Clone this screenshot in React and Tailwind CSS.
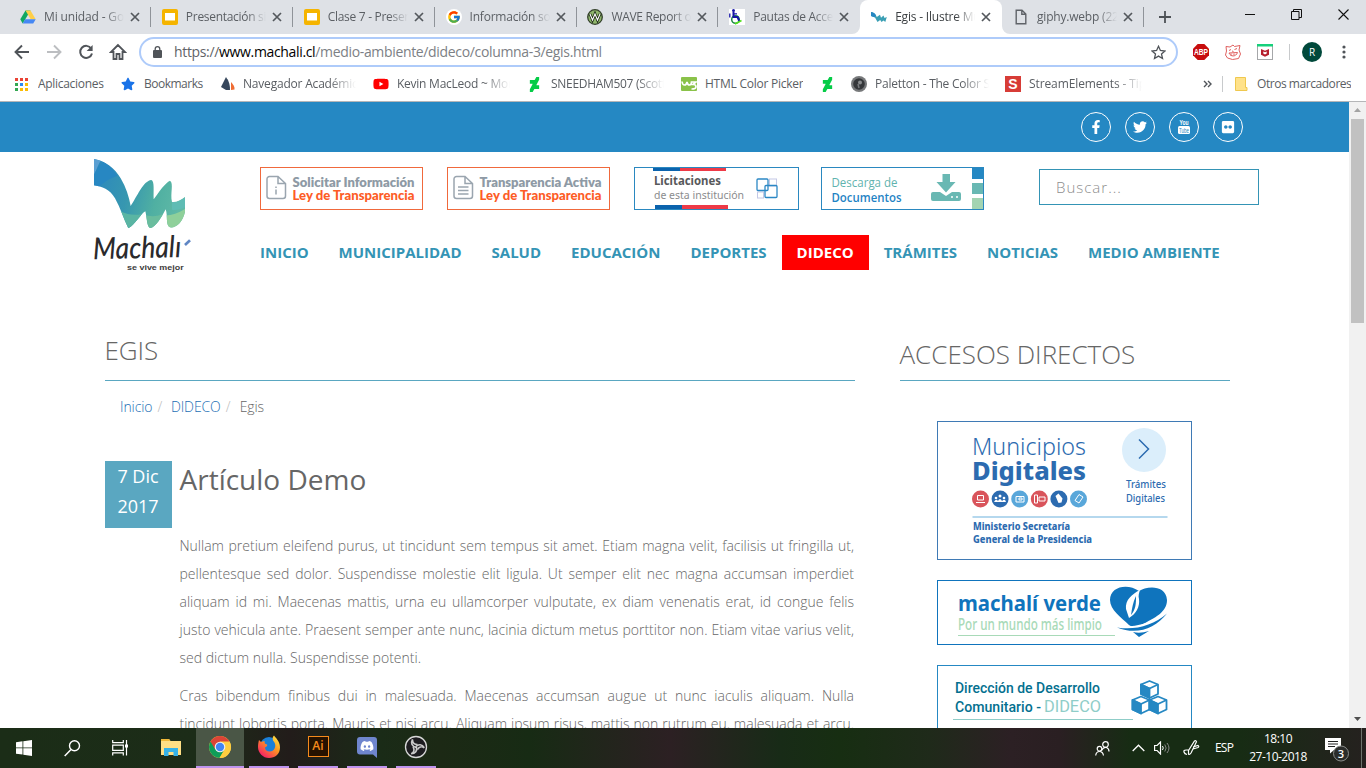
import React from "react";
import { FaFacebookF, FaTwitter, FaFlickr, FaDiscord, FaYoutube, FaStar } from "react-icons/fa";
import { FcGoogle } from "react-icons/fc";
import { SiDeviantart } from "react-icons/si";

const fade = "[mask-image:linear-gradient(to_right,#000_76%,transparent_100%)]";

/* ---------- browser tab icons ---------- */
const DriveIcon = () => (
  <svg width="16" height="16" viewBox="0 0 16 16">
    <path d="M5.5 1.5h5L5 10.7 2.7 14.5 0.3 10.3z" fill="#11a861" />
    <path d="M5.5 1.5h5l5.2 8.8h-5z" fill="#ffcf48" />
    <path d="M5.2 10.3h10.5l-2.5 4.2H2.7z" fill="#4688f4" />
  </svg>
);
const SlidesIcon = () => (
  <svg width="16" height="16" viewBox="0 0 16 16">
    <rect width="16" height="16" rx="2" fill="#f5b400" />
    <rect x="3" y="4" width="10" height="7.5" fill="#fff" />
  </svg>
);
const GoogleIcon = () => (
  <span className="flex h-4 w-4 items-center justify-center rounded-full bg-white">
    <FcGoogle size={14} />
  </span>
);
const WaveIcon = () => (
  <svg width="16" height="16" viewBox="0 0 16 16">
    <circle cx="8" cy="8" r="7.3" fill="#8fb56c" stroke="#33402b" strokeWidth="1.3" />
    <path d="M3 5l2.5 6L8 5l2.5 6L13 5" fill="none" stroke="#17240f" strokeWidth="2.6" />
    <path d="M3 5l2.5 6L8 5l2.5 6L13 5" fill="none" stroke="#fff" strokeWidth="1.1" />
  </svg>
);
const AccessIcon = () => (
  <svg width="16" height="16" viewBox="0 0 16 16">
    <rect width="16" height="16" fill="#fff" />
    <circle cx="6.5" cy="10.5" r="3.8" fill="none" stroke="#1d8a45" strokeWidth="1.5" />
    <circle cx="4.5" cy="1.5" r="1.5" fill="#1616a8" />
    <path d="M4.5 3v5h4l2 4.500" fill="none" stroke="#1616a8" strokeWidth="2" />
    <path d="M.8 4.500v4M4.500 4.800h3.500" stroke="#1616a8" strokeWidth="1.300" fill="none" />
    <path d="M6 15l6.500-3.500" stroke="#52e01e" strokeWidth="1.500" />
  </svg>
);
const MachaliIcon = () => (
  <svg width="16" height="16" viewBox="0 0 16 16">
    <path d="M0 3c3 .5 4.500 2 5.800 5L9 5.800l1 3L12.500 6.500l1 2.500L15.800 8l-1.500 5-1.800-1.500L10.500 13l-1.300-2L6.500 13 4 8.500 0 7z" fill="#3a9fb4" />
    <path d="M0 3c3 .5 4 1.500 5 3.500L3.500 8.200 0 7z" fill="#2787c2" />
  </svg>
);
const FileIcon = () => (
  <svg width="16" height="16" viewBox="0 0 16 16">
    <path d="M3.200 1.200h5.800l3.800 3.800v9.800h-9.600zM8.800 1.500v3.800h3.800" fill="none" stroke="#5f6368" strokeWidth="1.400" />
  </svg>
);
const Close = () => (
  <svg width="10" height="10" viewBox="0 0 10 10">
    <path d="M1 1l8 8M9 1l-8 8" stroke="#54585d" strokeWidth="1.700" />
  </svg>
);

const tabs = [
  { icon: <DriveIcon />, label: "Mi unidad - Google", track: "tracking-[-0.15px]" },
  { icon: <SlidesIcon />, label: "Presentación sin título", track: "tracking-[-0.3px]" },
  { icon: <SlidesIcon />, label: "Clase 7 - Presentación", track: "tracking-[-0.3px]" },
  { icon: <GoogleIcon />, label: "Información sobre", track: "tracking-[-0.22px]" },
  { icon: <WaveIcon />, label: "WAVE Report of", track: "tracking-[-0.3px]" },
  { icon: <AccessIcon />, label: "Pautas de Accesibilidad", track: "tracking-[-0.3px]" },
  { icon: <MachaliIcon />, label: "Egis - Ilustre Municipalidad", track: "tracking-[-0.2px]", active: true },
  { icon: <FileIcon />, label: "giphy.webp (220×220)", track: "tracking-[-0.2px]" },
];

function TabStrip() {
  return (
    <div className="flex h-[34px] bg-[#dee1e6] pl-[9px]">
      {tabs.map((t, i) => (
        <div
          key={i}
          className={
            "relative flex h-[34px] w-[141.86px] shrink-0 items-center pl-[11px] " +
            (t.active ? "rounded-t-lg bg-white" : "")
          }
        >
          {t.active && (
            <>
              <svg className="absolute bottom-0 -left-2" width="8" height="8"><path d="M8 0v8H0a8 8 0 0 0 8-8z" fill="#fff" /></svg>
              <svg className="absolute -right-2 bottom-0" width="8" height="8"><path d="M0 0v8h8a8 8 0 0 1-8-8z" fill="#fff" /></svg>
            </>
          )}
          <span className="flex w-4 shrink-0">{t.icon}</span>
          <span
            className={
              "ml-2 w-[80px] shrink-0 overflow-hidden text-[12px] leading-5 whitespace-nowrap " +
              fade + " " + t.track + " " + (t.active ? "text-[#3c4043]" : "text-[#5b5f64]")
            }
          >
            {t.label}
          </span>
          <span className="ml-[6px] flex"><Close /></span>
          {!t.active && i !== 5 && <span className="ml-[10px] h-5 w-px bg-[#8f9399]" />}
        </div>
      ))}
      <svg className="mt-[10px] ml-[14px]" width="14" height="14"><path d="M7 1v12M1 7h12" stroke="#4d5156" strokeWidth="1.800" /></svg>
      <div className="ml-auto flex items-start pt-[9px] pr-[17px]">
        <svg width="10" height="12"><path d="M0 5.500h10" stroke="#111" /></svg>
        <svg className="ml-[36px]" width="11" height="11"><path d="M.5 2.500h7.500v8H.5zM2.500 2.500v-2h8v8H8" fill="none" stroke="#111" /></svg>
        <svg className="ml-[36px]" width="11" height="11"><path d="M.5.5l10 10M10.500.5l-10 10" stroke="#111" strokeWidth="1.100" /></svg>
      </div>
    </div>
  );
}

function Toolbar() {
  return (
    <div className="flex h-[36px] items-center bg-white">
      <svg className="ml-[14px]" width="16" height="16" viewBox="0 0 16 16"><path d="M15 8H2M8 1.500L1.500 8 8 14.500" fill="none" stroke="#505459" strokeWidth="1.900" /></svg>
      <svg className="ml-[16px]" width="16" height="16" viewBox="0 0 16 16"><path d="M1 8h13M8 1.500L14.500 8 8 14.500" fill="none" stroke="#bcbec1" strokeWidth="1.900" /></svg>
      <svg className="ml-[16px]" width="16" height="16" viewBox="0 0 16 16"><path d="M13.200 4.500A6 6 0 1 0 14 9.500" fill="none" stroke="#505459" strokeWidth="2" /><path d="M14.600.9v6H8.600z" fill="#505459" /></svg>
      <svg className="ml-[15px]" width="18" height="18" viewBox="0 0 18 18"><path d="M9 2L2 9h2.500v7h3v-5h3v5h3V9H16z" fill="none" stroke="#505459" strokeWidth="1.800" /></svg>
      <div className="ml-[12px] flex h-[30px] w-[1039px] items-center rounded-full border-2 border-[#aecbfa] pl-[12px]">
        <svg width="9" height="12" viewBox="0 0 9 12"><rect y="4" width="9" height="8" rx="1" fill="#505459" /><path d="M2.200 5V3a2.300 2.300 0 0 1 4.600 0v2" fill="none" stroke="#505459" strokeWidth="1.300" /></svg>
        <span className="ml-[12px] text-[14px] leading-5 tracking-[-0.34px] whitespace-nowrap text-[#7c8085]">
          <span className="text-[#5f6368]">https://</span><span className="text-black">www.machali.cl</span>/medio-ambiente/dideco/columna-3/egis.html
        </span>
        <svg className="mr-[10px] ml-auto" width="15" height="15" viewBox="0 0 15 15"><path d="M7.500 1.300l1.900 4.200 4.500.5-3.400 3 1 4.500-4-2.400-4 2.400 1-4.500-3.400-3 4.500-.5z" fill="none" stroke="#505459" strokeWidth="1.300" /></svg>
      </div>
      <svg className="ml-[15px]" width="16" height="16" viewBox="0 0 16 16"><path d="M4.700 0h6.600L16 4.700v6.600L11.300 16H4.700L0 11.300V4.700z" fill="#c70d0d" /><text x="8" y="11" textAnchor="middle" textLength="14" lengthAdjust="spacingAndGlyphs" fontFamily="Liberation Sans" fontWeight="700" fontSize="8.500" fill="#fff">ABP</text></svg>
      <svg className="ml-[16px]" width="16" height="16" viewBox="0 0 16 16"><path d="M1 2.500l4 .5 3-2 1.500 1.500L15 1.500 14 6l1.500 4-2 4.500-6 1L2.500 14 .5 11l1-4zM4 6.500l2-1M9.500 5.500l2.500-1M4 9c1.500 4 7 4 8.500-.5zM7 7l1.500.5M6 9.500v2M9 9.500v2" fill="none" stroke="#e0605f" strokeWidth="1" /></svg>
      <svg className="ml-[16px]" width="16" height="16" viewBox="0 0 16 16"><rect x=".5" y=".5" width="15" height="15" fill="#fff" stroke="#a5a7a9" /><path d="M0 0h16v2.500H0z" fill="#16d07b" /><path d="M4 5l4 1.800L12 5v5.800l-4 2-4-2z" fill="#b61f2d" /><path d="M6.300 7.500L8 8.300l1.700-.8v2L8 10.500l-1.700-1z" fill="#fff" /></svg>
      <span className="ml-[16px] h-4 w-px bg-[#c8cacc]" />
      <span className="ml-[12px] flex h-5 w-5 items-center justify-center rounded-full bg-[#00493b] text-[10px] text-white">R</span>
      <svg className="ml-[20px]" width="4" height="14"><circle cx="2" cy="2" r="1.600" fill="#505459" /><circle cx="2" cy="7" r="1.600" fill="#505459" /><circle cx="2" cy="12" r="1.600" fill="#505459" /></svg>
    </div>
  );
}

const AppsIcon = () => (
  <svg width="13" height="13">
    {["#ea4335", "#ea4335", "#ea4335", "#34a853", "#2b8af5", "#fbbc05", "#34a853", "#fbbc05", "#fbbc05"].map((c, i) => (
      <rect key={i} x={(i % 3) * 5} y={Math.floor(i / 3) * 5} width="3" height="3" fill={c} />
    ))}
  </svg>
);

function Bookmarks() {
  const txt = "overflow-hidden text-[12px] leading-5 whitespace-nowrap shrink-0 text-[#5a5e63] ";
  return (
    <div className="flex h-[31px] items-center bg-white pb-[3px] pl-[15px]">
      <AppsIcon />
      <span className={txt + "ml-[10px] w-[83px] tracking-[-0.3px]"}>Aplicaciones</span>
      <FaStar size={14} color="#1a73e8" />
      <span className={txt + "ml-[9px] w-[77px] tracking-[-0.5px]"}>Bookmarks</span>
      <svg width="14" height="14" viewBox="0 0 14 14"><path d="M5 0c2 3 4 6 4 13H5L0 10z" fill="#36475c" /><path d="M10 5c2 2 4 5 3.500 7.500L10 13z" fill="#ef6c33" /></svg>
      <span className={txt + fade + " ml-[8px] w-[113px] tracking-[-0.2px]"}>Navegador Académico</span>
      <FaYoutube className="ml-[17px]" size={16} color="#f00" />
      <span className={txt + fade + " ml-[8px] w-[113px] tracking-[-0.25px]"}>Kevin MacLeod ~ Monk</span>
      <SiDeviantart className="ml-[17px]" size={15} color="#05cc47" />
      <span className={txt + fade + " ml-[9px] w-[113px] tracking-[-0.3px]"}>SNEEDHAM507 (Scott)</span>
      <svg className="ml-[17px]" width="16" height="14" viewBox="0 0 16 14"><rect width="16" height="14" rx="1" fill="#8ac249" /><path d="M1 4.500q.5 3.500 2.500 3.500T6 5q.5 3 2.500 3t2-3h4.500l-3 2.500q3 0 3 2.300T10.500 12" fill="none" stroke="#fff" strokeWidth="1.700" /></svg>
      <span className={txt + "ml-[8px] w-[98px] tracking-[-0.25px]"}>HTML Color Picker</span>
      <SiDeviantart className="ml-[17px]" size={15} color="#05cc47" />
      <svg className="ml-[16px]" width="16" height="16" viewBox="0 0 16 16"><circle cx="8" cy="8" r="8" fill="#77797b" /><circle cx="8" cy="8" r="5.800" fill="#35373a" /><circle cx="9" cy="6.500" r="2" fill="#8a8c8e" /><path d="M7 8l1 4" stroke="#77797b" strokeWidth="1.500" /></svg>
      <span className={txt + fade + " ml-[8px] w-[114px] tracking-[-0.25px]"}>Paletton - The Color Scheme</span>
      <svg className="ml-[16px]" width="16" height="16" viewBox="0 0 16 16"><rect width="16" height="16" fill="#d73c37" /><text x="8" y="13" textAnchor="middle" fontFamily="Liberation Sans" fontWeight="700" fontSize="14" fill="#fff">S</text></svg>
      <span className={txt + fade + " ml-[8px] w-[113px] tracking-[-0.1px]"}>StreamElements - Tip</span>
      <svg className="ml-[61px]" width="9" height="8"><path d="M1 1l3 3-3 3M5 1l3 3-3 3" fill="none" stroke="#505459" strokeWidth="1.400" /></svg>
      <span className="ml-[10px] h-4 w-px bg-[#c8cacc]" />
      <svg className="ml-[12px]" width="13" height="14" viewBox="0 0 13 14"><path d="M.5.5h10v10h1.500v3H.5z" fill="#ffe28a" stroke="#efc84f" /></svg>
      <span className={txt + "ml-[9px] tracking-[-0.45px]"}>Otros marcadores</span>
    </div>
  );
}

/* ---------- site header ---------- */
const YouTubeStack = () => (
  <svg width="14" height="16" viewBox="0 0 14 16">
    <text x="7" y="6.300" textAnchor="middle" textLength="9" lengthAdjust="spacingAndGlyphs" fontFamily="Liberation Sans" fontWeight="700" fontSize="7.500" fill="#fff">You</text>
    <rect x="1" y="7" width="12" height="8" rx="1.500" fill="#fff" />
    <text x="7" y="13.500" textAnchor="middle" textLength="10" lengthAdjust="spacingAndGlyphs" fontFamily="Liberation Sans" fontWeight="400" fontSize="7" fill="#2788c2">Tube</text>
  </svg>
);

const SocialBar = () => (
  <div className="flex h-[50px] items-center justify-end gap-[14px] bg-[#2588c3] pr-[106px] text-white">
    {[<FaFacebookF size={14} />, <FaTwitter size={14} />, <YouTubeStack />, <FaFlickr size={14} />].map((ic, i) => (
      <span key={i} className="flex h-[30px] w-[30px] items-center justify-center rounded-full border border-white">{ic}</span>
    ))}
  </div>
);

const Logo = () => (
  <svg className="shrink-0" width="100" height="116" viewBox="36 21 300 348">
    <defs>
      <linearGradient id="lg" x1="0" y1="0" x2="1" y2="0.200">
        <stop offset="0" stopColor="#2a85c0" /><stop offset=".45" stopColor="#3797b0" /><stop offset=".75" stopColor="#50b0a2" /><stop offset="1" stopColor="#5fb9a6" />
      </linearGradient>
      <clipPath id="sw"><path d="M42 27C75 32 105 55 122 85C138 112 147 140 152 168C170 142 190 92 214 90C224 94 220 120 221 148C238 124 256 98 270 92C282 100 270 130 276 156C290 158 302 150 315 141V185C308 215 290 234 270 232C256 226 264 198 257 178C245 202 225 235 210 234C200 228 202 208 196 184C182 192 165 225 145 235C130 205 122 175 105 145C90 118 65 110 42 106Z" /></clipPath>
    </defs>
    <g clipPath="url(#sw)">
      <rect x="36" y="20" width="290" height="220" fill="url(#lg)" />
      <path d="M36 20h34c-14 20-22 38-28 62h-6z" fill="#5a9fd2" />
      <path d="M70 35c20 12 34 28 42 42-24 8-42 20-58 36l-18-2v-25c8-20 18-36 34-51z" fill="#2787c2" />
      <path d="M120 183c25 12 45 14 66 9l-15 48h-51z" fill="#5ab5a3" />
      <path d="M190 193c18 7 36 8 58 0l-6 47h-52z" fill="#6abd9e" />
      <path d="M250 196c22 2 46-6 70-22v70h-70z" fill="#8fd09a" />
      <path d="M276 156c14 2 28-6 40-15v30c-16 8-28 10-40 8z" fill="#5fbcb4" />
    </g>
    <text transform="rotate(-1.500 40 326)" x="40" y="328" textLength="264" lengthAdjust="spacingAndGlyphs" fontFamily="Lato" fontStyle="italic" fontWeight="500" fontSize="90" fill="#2a2a2c">Machalı</text>
    <path d="M315 285l15-14" stroke="#5f86c4" strokeWidth="8" />
    <text x="141" y="359" textLength="170" lengthAdjust="spacingAndGlyphs" fontFamily="Liberation Sans" fontSize="22" fontWeight="700" fill="#3c3c3c">se vive mejor</text>
  </svg>
);

const DocIcon = ({ info }) => (
  <g fill="none" stroke="#9aa5af" strokeWidth="1.500">
    <path d="M9.500 9.500h8.500l7.500 7V29a2.500 2.500 0 0 1-2.500 2.500H9.500a2.500 2.500 0 0 1-2.500-2.500V12a2.500 2.500 0 0 1 2.500-2.500zM18 9.500v7h7" />
    {info ? <path d="M16 19.500v1.500M16 22.500v5" /> : <path d="M11 20h10.500M11 23.500h10.500M11 27h10.500" />}
  </g>
);
const Transparency = ({ title, info }) => (
  <svg width="163" height="43" className="border border-[#f0693c]" viewBox="1 1 161 41">
    <DocIcon info={info} />
    <text x="32.500" y="20" textLength="122" lengthAdjust="spacingAndGlyphs" fontFamily="Lato" fontWeight="800" fontSize="13.500" fill="#8e9aa5">{title}</text>
    <text x="32.500" y="32.500" textLength="122" lengthAdjust="spacingAndGlyphs" fontFamily="Lato" fontWeight="900" fontSize="13" fill="#fd5c26">Ley de Transparencia</text>
  </svg>
);
const Licitaciones = () => (
  <svg width="165" height="43" className="border border-[#2a88c0]" viewBox="1 1 163 41">
    <path d="M19 1h27v3H19zM21 38h27v4H21z" fill="#0b63ad" />
    <path d="M46 1h46v3H46zM48 38h46v4H48z" fill="#ee3a47" />
    <text x="20" y="18" textLength="67" lengthAdjust="spacingAndGlyphs" fontFamily="Noto Sans" fontWeight="700" fontSize="11.500" fill="#58595b">Licitaciones</text>
    <text x="20" y="32" textLength="90" lengthAdjust="spacingAndGlyphs" fontFamily="Noto Sans" fontSize="11" fill="#8b8c8e">de esta institución</text>
    <g fill="none"><rect x="135.500" y="12" width="7" height="7" stroke="#c3c8e6" /><rect x="123.500" y="25" width="6" height="6" stroke="#c3c8e6" />
      <rect x="123" y="12" width="11" height="11.500" rx="1" stroke="#2b88c5" strokeWidth="1.300" /><rect x="131" y="18.500" width="12" height="12" rx="1" stroke="#2b88c5" strokeWidth="1.300" /></g>
  </svg>
);
const Descarga = () => (
  <svg width="163" height="43" className="border border-[#2a88c0]" viewBox="1 1 161 41">
    <text x="10.500" y="19.500" textLength="66" lengthAdjust="spacingAndGlyphs" fontFamily="Open Sans" fontWeight="500" fontSize="12" fill="#5fb3ae">Descarga de</text>
    <text x="10.500" y="35" textLength="70" lengthAdjust="spacingAndGlyphs" fontFamily="Open Sans" fontWeight="600" fontSize="12" fill="#1f83c4">Documentos</text>
    <path d="M121.500 7h7.500v8h5.500L125 25.500 115.500 15h6z" fill="#69b8b3" />
    <path fillRule="evenodd" d="M112 25h7l6 4 6-4h7q2 0 2 2v5q0 2-2 2h-26q-2 0-2-2v-5q0-2 2-2zM130 30a1 1 0 1 0 2 0 1 1 0 0 0-2 0M135 30a1 1 0 1 0 2 0 1 1 0 0 0-2 0" fill="#69b8b3" />
    <path d="M151 1h12v11h-12z" fill="#2588c3" /><path d="M151 16h12v11h-12z" fill="#69b8b3" /><path d="M151 31h12v11h-12z" fill="#a3d4b2" />
  </svg>
);

const nav = ["INICIO", "MUNICIPALIDAD", "SALUD", "EDUCACIÓN", "DEPORTES", "DIDECO", "TRÁMITES", "NOTICIAS", "MEDIO AMBIENTE"];

const Header = () => (
  <div className="flex h-[167px] pt-[5px] pl-[92px]">
    <Logo />
    <div className="ml-[68px]">
      <div className="flex pt-[10px]">
        <Transparency title="Solicitar Información" info />
        <span className="w-6" />
        <Transparency title="Transparencia Activa" />
        <span className="w-6" />
        <Licitaciones />
        <span className="w-[22px]" />
        <Descarga />
        <div className="mt-[2px] ml-[55px] flex h-[36px] w-[220px] items-center border border-[#3494b5] pl-[16px] text-[15px] font-light tracking-[1px] text-[#8d8d8d]">Buscar...</div>
      </div>
      <div className="mt-[25px] -ml-[15px] flex">
        {nav.map((n) => (
          <span key={n} className={"h-[35px] px-[15px] text-[15px] leading-[35px] font-bold whitespace-nowrap " + (n === "DIDECO" ? "bg-[#ff0000] text-white" : "text-[#3494b5]")}>{n}</span>
        ))}
      </div>
    </div>
  </div>
);

/* ---------- article ---------- */
const paragraphs = [
  [
    "Nullam pretium eleifend purus, ut tincidunt sem tempus sit amet. Etiam magna velit, facilisis ut fringilla ut,",
    "pellentesque sed dolor. Suspendisse molestie elit ligula. Ut semper elit nec magna accumsan imperdiet",
    "aliquam id mi. Maecenas mattis, urna eu ullamcorper vulputate, ex diam venenatis erat, id congue felis",
    "justo vehicula ante. Praesent semper ante nunc, lacinia dictum metus porttitor non. Etiam vitae varius velit,",
    "sed dictum nulla. Suspendisse potenti.",
  ],
  [
    "Cras bibendum finibus dui in malesuada. Maecenas accumsan augue ut nunc iaculis aliquam. Nulla",
    "tincidunt lobortis porta. Mauris et nisi arcu. Aliquam ipsum risus, mattis non rutrum eu, malesuada et arcu.",
  ],
];

const Article = () => (
  <div className="w-[750px]">
    <h1 className="h-[62px] border-b border-[#5aa7c1] pt-[14px] text-[26px] leading-[35px] font-light tracking-[-0.1px] text-[#666]"><span className="-ml-[0.500px]">EGIS</span></h1>
    <div className="mt-[16px] flex pl-[15px] text-[14px] leading-5 font-light tracking-[-0.1px] text-[#666]">
      <span className="text-[#1c6fb5]">Inicio</span>
      <span className="w-[18.500px] pl-[5px] text-[#bbb]">/</span>
      <span className="text-[#1c6fb5]">DIDECO</span>
      <span className="w-[19px] pl-[5px] text-[#bbb]">/</span>
      <span>Egis</span>
    </div>
    <div className="mt-[44px] flex">
      <div className="h-[67px] w-[67px] bg-[#5aa7c1] pr-px text-center text-[18px] leading-[30px] font-medium text-white">7 Dic<br />2017</div>
      <div className="ml-[7.500px] w-[674.500px]">
        <h2 className="h-[71px] text-[28px] leading-[36px] text-[#666]">Artículo Demo</h2>
        {paragraphs.map((lines, i) => (
          <p key={i} className="mb-[10px] text-[14px] leading-[28px] font-light text-[#666]">
            {lines.map((l, j) => (
              <span key={j} className={"block whitespace-nowrap " + (i === 0 && j === 4 ? "" : "[text-align-last:justify]")}>{l}</span>
            ))}
          </p>
        ))}
      </div>
    </div>
  </div>
);

/* ---------- sidebar banners ---------- */
const Municipios = () => (
  <svg width="255" height="139" viewBox="0 0 255 139" className="block">
    <rect x=".5" y=".5" width="254" height="138" fill="#fff" stroke="#3f7ab5" />
    <g fontFamily="Noto Sans" fill="#2c6bb0">
      <text x="35" y="34" textLength="114" lengthAdjust="spacingAndGlyphs" fontWeight="350" fontSize="23.500">Municipios</text>
      <text x="35" y="58.500" textLength="114" lengthAdjust="spacingAndGlyphs" fontWeight="800" fontSize="24.500">Digitales</text>
      <text x="189" y="67" textLength="40" lengthAdjust="spacingAndGlyphs" fontWeight="500" fontSize="10.500">Trámites</text>
      <text x="189" y="80.500" textLength="39" lengthAdjust="spacingAndGlyphs" fontWeight="500" fontSize="10.500">Digitales</text>
      <text x="36" y="109" textLength="97" lengthAdjust="spacingAndGlyphs" fontWeight="800" fontSize="10">Ministerio Secretaría</text>
      <text x="36" y="122" textLength="119" lengthAdjust="spacingAndGlyphs" fontWeight="800" fontSize="10">General de la Presidencia</text>
    </g>
    <circle cx="207" cy="29" r="22" fill="#dbeefb" />
    <path d="M202 18.500l9.500 9.500-9.500 9.500" fill="none" stroke="#2c6bb0" strokeWidth="1.500" />
    <path d="M35.500 96h195" stroke="#9dcbe8" strokeWidth="1.400" />
    {["#d9545b", "#2c6bb0", "#59a7da", "#d9545b", "#2c6bb0", "#59a7da"].map((c, i) => (
      <circle key={i} cx={43.500 + i * 19.600} cy="78" r="8.500" fill={c} />
    ))}
    <g fill="none" stroke="#fff" strokeWidth="1">
      <path d="M40.500 74.500h6v4.500h-6zM39 81.500h9" />
      <path d="M79 75.500h8v5.500h-8zM82 77h3v2h-3z" />
      <path d="M97.500 74h3v8h-3zM102 76h6v4h-6z" />
      <path d="M138 79.500l4-6 4 2.500-4 6z" />
    </g>
    <g fill="#fff"><circle cx="63" cy="75" r="1.500" /><circle cx="59" cy="77" r="1.300" /><circle cx="67" cy="77" r="1.300" /><path d="M57 81q2-4 4-1 2-4 4 0 3-3 4 1z" /><path d="M118.500 75l3-2.500 4 5-1 4-3 .5z" /></g>
  </svg>
);
const Verde = () => (
  <svg width="255" height="65" viewBox="0 0 255 65" className="block">
    <rect x=".5" y=".5" width="254" height="64" fill="#fff" stroke="#0f74bd" />
    <text x="21" y="31" textLength="143" lengthAdjust="spacingAndGlyphs" fontFamily="Noto Sans" fontWeight="700" fontSize="22" fill="#0f74bd">machalí verde</text>
    <text x="21" y="50" textLength="144" lengthAdjust="spacingAndGlyphs" fontFamily="Noto Sans" fontWeight="500" fontSize="15.500" fill="#a8dab8">Por un mundo más limpio</text>
    <path d="M21 55.500h157" stroke="#a8dab8" />
    <path d="M202 11c7-5 27-7 28 9 0 12-12 18-26 25-5 2-9 2-12 0-8-8-19-15-19-25 0-14 18-17 29-9z" fill="#0f74bd" />
    <path d="M203 10c-8 4-15 10-14 19l3 9c7-4 11-11 10-19-1-3 0-6 1-9z" fill="#fff" />
    <path d="M194 35c1-7 2-13 5-19 0 7 0 13-5 19z" fill="#0f74bd" />
    <path d="M176 46c20 6 42-2 56-16-10 19-32 30-56 16z" fill="#fff" stroke="#fff" strokeWidth="3" />
    <path d="M180 47.500c18 3 36-2 50-14-12 15-30 22-50 14zM196 52q7 2 16-1l-10 6z" fill="#0f74bd" />
  </svg>
);
const Dideco = () => (
  <svg width="255" height="65" viewBox="0 0 255 65" className="block">
    <rect x=".5" y=".5" width="254" height="64" fill="#fff" stroke="#2588c3" />
    <g fontFamily="Roboto" fontSize="14"><text x="18" y="28" textLength="145" lengthAdjust="spacingAndGlyphs" fontWeight="500" fill="#04708f">Dirección de Desarrollo</text>
      <text x="18" y="47" textLength="86" lengthAdjust="spacingAndGlyphs" fontWeight="500" fill="#04708f">Comunitario -</text>
      <text x="107" y="46.500" textLength="57" lengthAdjust="spacingAndGlyphs" fontSize="16" fill="#8fcdc8">DIDECO</text></g>
    <path d="M16 54.500h180" stroke="#8fcdc8" />
    <g fill="#fff" stroke="#2588c3" strokeWidth="1.800" strokeLinejoin="round">
      {[[212.5, 16], [204, 31.5], [221, 31.5]].map(([x, y]) => (
        <g key={x}>
          <path d={`M${x} ${y}l8.500 3.500v9.500l-8.500 4-8.500-4v-9.500z`} />
          <path d={`M${x - 8.5} ${y + 3.5}l8.500 4v9.500l-8.500-4z`} fill="#2588c3" />
          <path d={`M${x - 8.5} ${y + 3.5}l8.500 4 8.500-4`} fill="none" />
        </g>
      ))}
    </g>
  </svg>
);

const Sidebar = () => (
  <div className="ml-[45px] w-[330px]">
    <h2 className="h-[62px] border-b border-[#5aa7c1] pt-[18px] text-[26px] leading-[35px] font-light whitespace-nowrap text-[#666]"><span className="-ml-[0.500px]">ACCESOS DIRECTOS</span></h2>
    <div className="flex flex-col gap-[20px] pt-[40px] pl-[37px]">
      <Municipios />
      <Verde />
      <Dideco />
    </div>
  </div>
);

/* ---------- taskbar ---------- */
const Chrome = () => (
  <svg width="24" height="24" viewBox="0 0 24 24">
    <circle cx="12" cy="12" r="11" fill="#ffcd40" />
    <path d="M12 12L2.500 6.500A11 11 0 0 0 11.500 23l5-8.500z" fill="#0f9d58" />
    <path d="M12 6.500h9.500A11 11 0 0 1 11.500 23l5.300-8.500z" fill="#ffcd40" />
    <path d="M2.500 6.500A11 11 0 0 1 21.500 6.500H12L7 14z" fill="#db4437" />
    <circle cx="12" cy="12" r="5.300" fill="#f1f1f1" /><circle cx="12" cy="12" r="4.200" fill="#4285f4" />
  </svg>
);
const Firefox = () => (
  <svg width="24" height="24" viewBox="0 0 24 24">
    <defs><linearGradient id="ff" x1="1" y1="0" x2="0.200" y2="1"><stop offset="0" stopColor="#fff34f" /><stop offset=".45" stopColor="#ff9a1f" /><stop offset="1" stopColor="#f5156c" /></linearGradient></defs>
    <circle cx="12" cy="11" r="9" fill="#1b7fd8" />
    <path d="M2 5l2 2q2-1 4-.5C7 8 8 9 10 9.500q1 1.500-2 3c0 4 5 5 8 3 3-2.500 3-7 0-10Q15 2 17 .5c1 2 6 5 6 12C23 19 18 23 12 23S1 18 1 12C1 9 1.500 7 2 5z" fill="url(#ff)" />
  </svg>
);
const Discord = () => (
  <svg width="20" height="21" viewBox="0 0 20 21">
    <path d="M3 0h14q3 0 3 3v18l-4-3.500H3q-3 0-3-3V3Q0 0 3 0z" fill="#6f86ce" />
    <FaDiscord x="3" y="2" size={14} color="#fff" />
  </svg>
);
const Obs = () => (
  <svg width="24" height="24" viewBox="0 0 24 24">
    <circle cx="12" cy="12" r="10.500" fill="#1d1c20" stroke="#d7d7d7" strokeWidth="1.300" />
    {[0, 120, 240].map((a) => (
      <path key={a} transform={`rotate(${a} 12 12)`} d="M12 12.500C8 11.500 6.500 8 8.500 4.500 8.300 8 10.500 9.500 13.500 9.500" fill="none" stroke="#c9c9c9" strokeWidth="1.600" />
    ))}
  </svg>
);

const running = [
  { w: "w-[48px] ml-0 bg-[#4a5646]", icon: <Chrome /> },
  { w: "w-[40px] ml-[5px]", icon: <Firefox /> },
  { w: "w-[40px] ml-[9px]", icon: <span className="mb-[2px] flex h-[21px] w-[21px] items-center justify-center border-[1.500px] border-[#f68a1c] bg-[#261200] text-[12px] font-semibold text-[#f68a1c]">Ai</span> },
  { w: "w-[40px] ml-[9px]", icon: <Discord /> },
  { w: "w-[40px] ml-[9px]", icon: <Obs /> },
];

const Taskbar = () => (
  <div className="flex h-10 bg-[linear-gradient(90deg,#1b2d17_0,#1c2c18_200px,#221c1a_290px,#1a2b17_380px,#1c2915_440px,#172b14_530px,#2c2023_670px,#182b17_780px,#172e12_840px,#1f2a1a_930px,#2c2024_1010px,#2a1f22_1060px,#172c14_1130px,#172c14_1240px,#25211f_1366px)] text-white">
    <svg className="mt-3 ml-4" width="16" height="16"><path d="M0 2.200l6.500-.9v6.200H0zM7.300 1.200L16 0v7.500H7.300zM0 8.300h6.500v6.300L0 13.700zM7.300 8.300H16V16l-8.700-1.200z" fill="#fff" /></svg>
    <svg className="mt-3 ml-[32px]" width="17" height="17"><circle cx="10.500" cy="5.800" r="5" fill="none" stroke="#fff" strokeWidth="1.400" /><path d="M7 9.500L.7 16" stroke="#fff" strokeWidth="1.500" /></svg>
    <svg className="mt-[12px] ml-[31px]" width="17" height="16"><path d="M.7 0v2.700h10.600V0M.7 15.500v-2.700h10.600v2.700M.7 5.200h10.600v5.200H.7zM14.500 0v15.500" fill="none" stroke="#fff" strokeWidth="1.200" /><path d="M13 4.500h3v3h-3z" fill="#fff" /></svg>
    <svg className="mt-[10px] ml-[31px]" width="22" height="20"><path d="M1 1h8l1.500 2H21v14H1z" fill="#ffdf85" /><path d="M1 1h8l1.300 2H1z" fill="#f0b93a" /><path d="M4 18v-8h14v8h-4.500v-4h-5v4z" fill="#35b2e8" /></svg>
    <div className="ml-[14px] flex">
      {running.map((r, i) => (
        <div key={i} className={"flex h-10 items-center justify-center border-b-2 border-[#be93ee] " + r.w}>{r.icon}</div>
      ))}
    </div>
    <div className="ml-auto flex items-center">
      <svg width="15" height="15"><g fill="none" stroke="#fff" strokeWidth="1.200"><circle cx="10.500" cy="3.500" r="2.800" /><path d="M6.500 9.500q2-4 5-3 2.500 1 2.500 4" /><circle cx="4.500" cy="7.700" r="2.300" /><path d="M.7 14.500q.5-4 3.800-4t4 4" /></g></svg>
      <svg className="ml-[22px]" width="13" height="8"><path d="M.7 7l5.800-5.800L12.300 7" fill="none" stroke="#fff" strokeWidth="1.300" /></svg>
      <svg className="ml-[9px]" width="17" height="14"><path d="M.6 4.500h2.500L6.500 1v12L3.100 9.500H.6z" fill="none" stroke="#fff" strokeWidth="1.200" /><path d="M8.500 5q1.500 2 0 4" fill="none" stroke="#fff" /><path d="M10.800 3.500q2.700 3.500 0 7M13 2q4 5 0 10" fill="none" stroke="#888" /></svg>
      <svg className="ml-[12px]" width="17" height="16"><path d="M5.500 10.500L11.500 1q1.500-1 2 .8L8 13q-1.500 2-2.500 1zM5.500 10H3q-2.500 0-2 2t3 2.500M10 7l5-1.500q1.500 1 0 2L10 9" fill="none" stroke="#fff" strokeWidth="1.200" /></svg>
      <span className="ml-[15px] w-[20px] text-[12px] tracking-[-0.8px]">ESP</span>
      <div className="ml-[13px] w-[60px] text-center text-[12px] leading-[18px] tracking-[-0.5px] whitespace-nowrap"><div>18:10</div><div>27-10-2018</div></div>
      <svg className="mt-[4px] ml-[17px]" width="25" height="25"><path d="M0 0h16v12H9l-4 3.500V12H0z" fill="#fff" /><path d="M3 3.500h10M3 6h10M3 8.500h7" stroke="#222" /><circle cx="16" cy="15.500" r="7.500" fill="#2b2d2b" stroke="#8b8d8b" /><text x="16" y="19.500" textAnchor="middle" fontFamily="Open Sans" fontSize="11" fontWeight="600" fill="#fff">3</text></svg>
      <span className="ml-[11px] h-10 w-px bg-[#6d736c]" />
      <span className="w-[4px]" />
    </div>
  </div>
);

export default function App() {
  return (
    <div className="h-[768px] w-[1366px] overflow-hidden bg-white font-['Open_Sans','Noto_Sans',sans-serif]">
      <TabStrip />
      <Toolbar />
      <Bookmarks />
      <div className="h-px bg-[#b5b6b8]" />
      <div className="flex h-[626px] overflow-hidden">
        <div className="h-[626px] w-[1349px] overflow-hidden">
          <SocialBar />
          <Header />
          <div className="flex pl-[105px]">
            <Article />
            <Sidebar />
          </div>
        </div>
        <div className="flex w-[17px] flex-col items-center bg-[#f1f1f1]">
          <svg className="mt-[6px]" width="7" height="4"><path d="M3.500 0L7 4H0z" fill="#a3a3a3" /></svg>
          <div className="mt-[7px] h-[204px] w-[13px] bg-[#c1c1c1]" />
          <svg className="mt-auto mb-[7px]" width="7" height="4"><path d="M0 0h7L3.500 4z" fill="#505050" /></svg>
        </div>
      </div>
      <Taskbar />
    </div>
  );
}
